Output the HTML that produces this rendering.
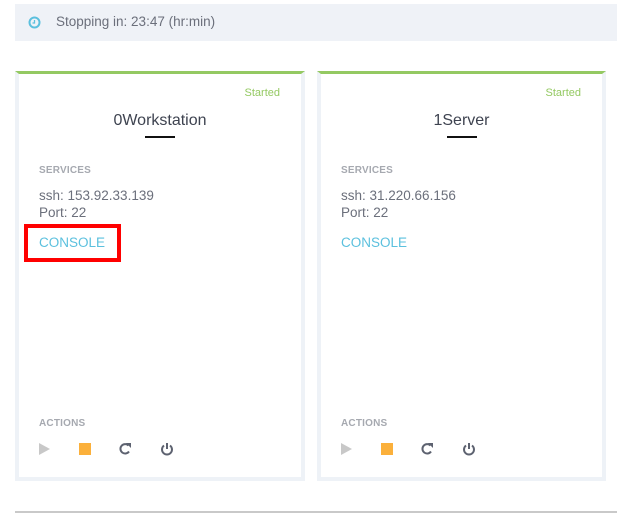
<!DOCTYPE html><html><head><style>
*{margin:0;padding:0;box-sizing:border-box}
body{width:617px;height:523px;background:#fff;font-family:"Liberation Sans",sans-serif;position:relative;overflow:hidden}
.banner{position:absolute;left:15px;top:4px;width:602px;height:37px;background:#eff2f7;color:#6b6f7b;font-size:13.5px;line-height:36px;padding-left:41px}
.card{position:absolute;top:71px;width:290px;height:410px;border:4px solid #eef2f7;border-top:3px solid #94c962;background:#fff}
.st{position:absolute;right:21px;top:13px;font-size:11px;color:#94c962}
.title{position:absolute;left:0;right:0;top:38px;text-align:center;font-size:16px;color:#3e4350}
.ul{position:absolute;left:126px;top:62px;width:30px;height:2px;background:#111}
.lbl{position:absolute;left:20px;font-size:10px;color:#a6a9b0;font-weight:bold;letter-spacing:0.2px}
.txt{position:absolute;left:20px;top:113px;font-size:13.5px;color:#6b6f7b;line-height:17px}
.con{position:absolute;left:20px;top:161px;font-size:13.5px;color:#5bc0de}
.ic{position:absolute;top:367px}
</style></head><body>
<div class="banner"><svg style="position:absolute;left:13px;top:12px" width="13" height="13" viewBox="0 0 13 13"><circle cx="6.5" cy="6.5" r="5" fill="none" stroke="#5bc0de" stroke-width="2"/><path d="M6.5 4v3h-2" fill="none" stroke="#5bc0de" stroke-width="1.3"/></svg>Stopping in: 23:47 (hr:min)</div>

<div class="card" style="left:15px">
<div class="st">Started</div><div class="title">0Workstation</div><div class="ul"></div>
<div class="lbl" style="top:91px">SERVICES</div>
<div class="txt">ssh: 153.92.33.139<br>Port: 22</div>
<div class="con">CONSOLE</div>
<div class="lbl" style="top:344px">ACTIONS</div>
<svg class="ic" style="left:20px" width="160" height="16" viewBox="0 0 160 16"><path d="M0 2L11 8L0 14Z" fill="#c8c8c8"/><rect x="40" y="2" width="12" height="12" fill="#fbb03b"/><path d="M89.5 4.5A4.7 4.7 0 1 0 90 10.5" fill="none" stroke="#5d6270" stroke-width="2"/><path d="M87 2L92 2L92 7Z" fill="#5d6270"/><path d="M125 4.5A5 5 0 1 0 131 4.5" fill="none" stroke="#5d6270" stroke-width="2"/><path d="M128 2v6" stroke="#5d6270" stroke-width="2"/></svg>
</div>

<div class="card" style="left:317px;width:289px">
<div class="st">Started</div><div class="title">1Server</div><div class="ul"></div>
<div class="lbl" style="top:91px">SERVICES</div>
<div class="txt">ssh: 31.220.66.156<br>Port: 22</div>
<div class="con">CONSOLE</div>
<div class="lbl" style="top:344px">ACTIONS</div>
<svg class="ic" style="left:20px" width="160" height="16" viewBox="0 0 160 16"><path d="M0 2L11 8L0 14Z" fill="#c8c8c8"/><rect x="40" y="2" width="12" height="12" fill="#fbb03b"/><path d="M89.5 4.5A4.7 4.7 0 1 0 90 10.5" fill="none" stroke="#5d6270" stroke-width="2"/><path d="M87 2L92 2L92 7Z" fill="#5d6270"/><path d="M125 4.5A5 5 0 1 0 131 4.5" fill="none" stroke="#5d6270" stroke-width="2"/><path d="M128 2v6" stroke="#5d6270" stroke-width="2"/></svg>
</div>

<div style="position:absolute;left:24px;top:224px;width:97px;height:38px;border:4px solid #f00"></div>
<div style="position:absolute;left:15px;top:511px;width:602px;height:2px;background:#c9c9c9"></div>
</body></html>
